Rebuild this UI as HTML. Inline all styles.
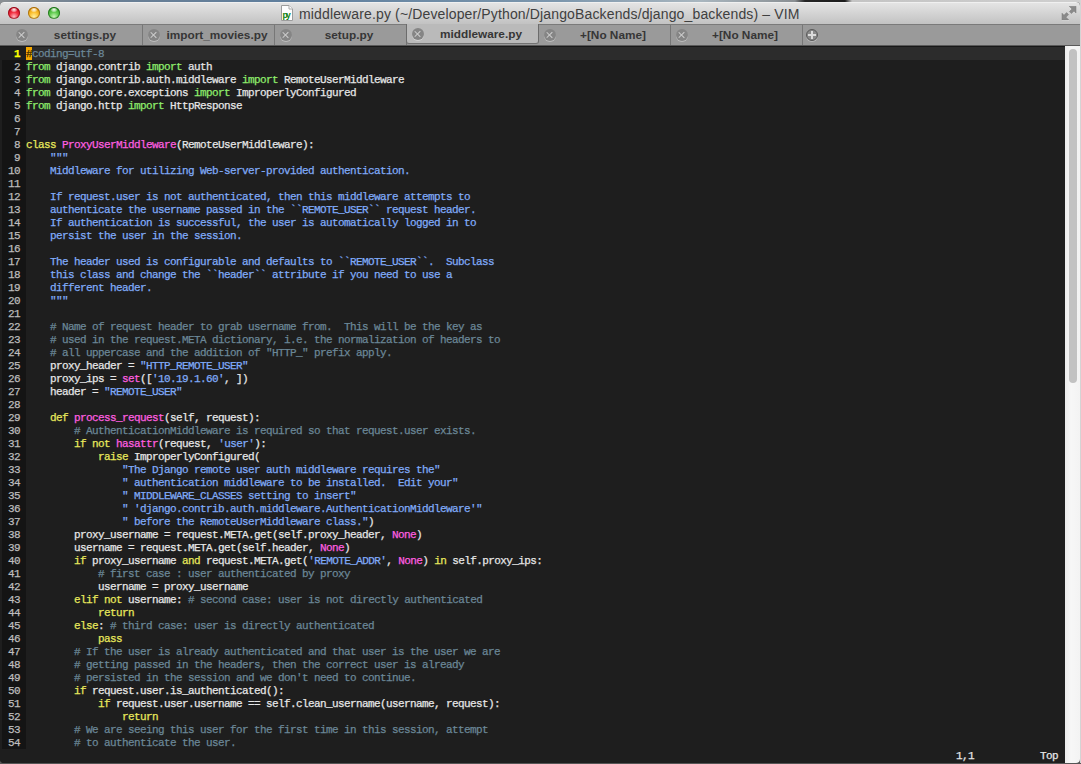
<!DOCTYPE html>
<html><head><meta charset="utf-8">
<style>
*{margin:0;padding:0;box-sizing:border-box}
html,body{width:1081px;height:764px;overflow:hidden;background:#555}
body{position:relative;font-family:"Liberation Sans",sans-serif}
#desk{position:absolute;left:0;top:0;width:1081px;height:8px;background:linear-gradient(90deg,#8a8e92 0px,#6a7f94 110px,#5f7f9e 300px,#7d97ad 560px,#a9b6bf 700px,#8a8f93 795px,#262626 805px,#1c1c1c 845px,#c4c4c4 852px,#cfcfcf 1081px)}
#win{position:absolute;left:0;top:2px;width:1080px;height:761px;background:#1e1e1e;border-radius:4px 4px 4px 4px;overflow:hidden}
#title{position:absolute;left:0;top:0;width:1080px;height:22px;background:linear-gradient(#e4e4e4,#d0d0d0 60%,#c2c2c2);border-top:1px solid #f0f0f0}
.tl{position:absolute;top:4px;width:12px;height:12px;border-radius:50%}.tl:after{content:"";position:absolute;left:3px;top:1px;width:6px;height:4px;border-radius:50%;background:radial-gradient(ellipse at 50% 40%,rgba(255,255,255,.95),rgba(255,255,255,.2) 80%,rgba(255,255,255,0))}
#ttxt{position:absolute;left:299px;top:2.5px;font-size:14px;letter-spacing:0.14px;color:#404040;white-space:nowrap;line-height:16px}
#doc{position:absolute;left:281px;top:2px;width:12px;height:16px}
#tabs{position:absolute;left:0;top:22px;width:1080px;height:21px;background:#9a9a9a;border-top:1px solid #7a7a7a}
.tab{position:absolute;top:0;height:21px;width:132px;border-right:1px solid #777}
.tab span{position:absolute;left:0;width:132px;text-align:center;top:3px;font-size:11.8px;font-weight:bold;color:#363636;line-height:14px;text-indent:16px}
.x{position:absolute;left:5px;top:4px;width:12px;height:12px;border-radius:50%;background:#858585;box-shadow:0 1px 0 rgba(255,255,255,.35)}
.x:before,.x:after{content:"";position:absolute;left:5.4px;top:2px;width:1.2px;height:8px;background:#d0d0d0;transform:rotate(45deg)}
.x:after{transform:rotate(-45deg)}
.tab.act{background:#bababa;top:-1px;height:20px;border-left:1px solid #6c6c6c;border-right:1px solid #6c6c6c;border-bottom:1px solid #727272;border-radius:0 0 3px 3px}
#tabbot{position:absolute;left:0;top:43px;width:1080px;height:2px;background:linear-gradient(#5a5a5a 50%,#181818 50%)}
#ed{position:absolute;left:0;top:45px;width:1065px;height:716px;background:#1e1e1e}
#code{position:absolute;left:2px;top:1px;-webkit-text-stroke:0.25px currentColor;font-family:"Liberation Mono",monospace;font-size:11px;line-height:13px;letter-spacing:-0.6px;color:#e6e6e6;white-space:pre}
#code div{height:13px;width:1063px}
#cl{position:absolute;left:26px;top:0;width:1039px;height:13px;background:#2c2c2c}#lnbg{position:absolute;left:2px;top:13px;width:24px;height:689px;background:#141414}
#code b{font-weight:normal;color:#bdbdbd}
#code .cl b{color:#ffff00;font-weight:bold}
#code i{font-style:normal}
.c{color:#6b8797}.s{color:#80abf8}.k{color:#e8e85c}.g{color:#8eec6c}.f{color:#ff5ee0}
.cur{color:#3a2a00}#cursor{position:absolute;left:26px;top:0;width:6px;height:13px;background:#f5a800}
#ruler{position:absolute;left:956px;top:703px;-webkit-text-stroke:0.25px currentColor;font-family:"Liberation Mono",monospace;font-size:11px;line-height:13px;letter-spacing:-0.6px;color:#e6e6e6;white-space:pre}
#sb{position:absolute;left:1065px;top:44px;width:15px;height:717px;background:linear-gradient(90deg,#ececec,#f7f7f7 40%,#f3f3f3)}
#thumb{position:absolute;left:4px;top:3px;width:8px;height:334px;border-radius:4px;background:#c2c2c2}
</style></head><body>
<div id="desk"></div><div style="position:absolute;left:1080px;top:0;width:1px;height:763px;background:#d4d4d4"></div>
<div id="win">
 <div id="title">
  <div class="tl" style="left:8px;background:radial-gradient(circle at 50% 80%,#ffb8c0 0,#f23040 40%,#c00018 85%,#900010 100%);box-shadow:inset 0 0 0 1px rgba(110,0,10,.55)"></div>
  <div class="tl" style="left:28px;background:radial-gradient(circle at 50% 80%,#fff0a0 0,#fbc030 40%,#d88a00 85%,#a06000 100%);box-shadow:inset 0 0 0 1px rgba(120,70,0,.55)"></div>
  <div class="tl" style="left:48px;background:radial-gradient(circle at 50% 80%,#c8f5b8 0,#62cc50 40%,#2f9a25 85%,#1d6a15 100%);box-shadow:inset 0 0 0 1px rgba(0,70,0,.55)"></div>
  <svg id="doc" viewBox="0 0 12 16"><path d="M0.5 0.5H8L11.5 4V15.5H0.5Z" fill="#fdfdfd" stroke="#9c9c9c"/><path d="M8 0.5V4H11.5" fill="#fff" stroke="#a8a8a8"/><text x="1.6" y="12.6" font-family="Liberation Sans" font-size="8.5" fill="#0d800d" style="font-weight:bold" textLength="8.2">py</text></svg>
  <div id="ttxt">middleware.py (~/Developer/Python/DjangoBackends/django_backends) – VIM</div>
  <svg style="position:absolute;left:1061px;top:3px" width="16" height="16" viewBox="0 0 16 16"><g fill="#fafafa" opacity=".7"><path d="M1 14H8V15H1Z"/></g><g fill="#8a8a8a" stroke="#7a7a7a" stroke-width=".5"><path d="M8.2 0.2H15V7L13 5L10.4 7.6L8.4 5.6L11 3Z"/><path d="M1 7.2L3 9.2L5.6 6.6L7.6 8.6L5 11.2L7.8 14H1Z"/></g></svg>
 </div>
 <div id="tabs">
  <div class="tab" style="left:11px"><div class="x"></div><span>settings.py</span></div>
  <div class="tab" style="left:143px"><div class="x"></div><span>import_movies.py</span></div>
  <div class="tab" style="left:275px"><div class="x"></div><span>setup.py</span></div>
  <div class="tab act" style="left:406px;width:133px"><div class="x"></div><span>middleware.py</span></div>
  <div class="tab" style="left:539px"><div class="x"></div><span>+[No Name]</span></div>
  <div class="tab" style="left:671px"><div class="x"></div><span>+[No Name]</span></div>
  <div style="position:absolute;left:806px;top:4px;width:12px;height:12px;border-radius:50%;background:#8a8a8a;border:1px solid #595959;box-shadow:0 1px 0 rgba(255,255,255,.3)"><div style="position:absolute;left:4px;top:1px;width:2px;height:8px;background:#dcdcdc"></div><div style="position:absolute;left:1px;top:4px;width:8px;height:2px;background:#dcdcdc"></div></div>
 </div>
 <div id="tabbot"></div>
 <div id="ed">
  <div id="cl"></div><div id="lnbg"></div><div id="cursor"></div>
  <div id="code"><div class=cl><b>  1 </b><i class=cur>#</i><i class=c>coding=utf-8</i></div><div><b>  2 </b><i class=g>from</i> django.contrib <i class=g>import</i> auth</div><div><b>  3 </b><i class=g>from</i> django.contrib.auth.middleware <i class=g>import</i> RemoteUserMiddleware</div><div><b>  4 </b><i class=g>from</i> django.core.exceptions <i class=g>import</i> ImproperlyConfigured</div><div><b>  5 </b><i class=g>from</i> django.http <i class=g>import</i> HttpResponse</div><div><b>  6 </b></div><div><b>  7 </b></div><div><b>  8 </b><i class=k>class</i> <i class=f>ProxyUserMiddleware</i>(RemoteUserMiddleware):</div><div><b>  9 </b>    <i class=s>"""</i></div><div><b> 10 </b>    <i class=s>Middleware for utilizing Web-server-provided authentication.</i></div><div><b> 11 </b></div><div><b> 12 </b>    <i class=s>If request.user is not authenticated, then this middleware attempts to</i></div><div><b> 13 </b>    <i class=s>authenticate the username passed in the ``REMOTE_USER`` request header.</i></div><div><b> 14 </b>    <i class=s>If authentication is successful, the user is automatically logged in to</i></div><div><b> 15 </b>    <i class=s>persist the user in the session.</i></div><div><b> 16 </b></div><div><b> 17 </b>    <i class=s>The header used is configurable and defaults to ``REMOTE_USER``.  Subclass</i></div><div><b> 18 </b>    <i class=s>this class and change the ``header`` attribute if you need to use a</i></div><div><b> 19 </b>    <i class=s>different header.</i></div><div><b> 20 </b>    <i class=s>"""</i></div><div><b> 21 </b></div><div><b> 22 </b>    <i class=c># Name of request header to grab username from.  This will be the key as</i></div><div><b> 23 </b>    <i class=c># used in the request.META dictionary, i.e. the normalization of headers to</i></div><div><b> 24 </b>    <i class=c># all uppercase and the addition of "HTTP_" prefix apply.</i></div><div><b> 25 </b>    proxy_header = <i class=s>"HTTP_REMOTE_USER"</i></div><div><b> 26 </b>    proxy_ips = <i class=f>set</i>([<i class=s>'10.19.1.60'</i>, ])</div><div><b> 27 </b>    header = <i class=s>"REMOTE_USER"</i></div><div><b> 28 </b></div><div><b> 29 </b>    <i class=k>def</i> <i class=f>process_request</i>(self, request):</div><div><b> 30 </b>        <i class=c># AuthenticationMiddleware is required so that request.user exists.</i></div><div><b> 31 </b>        <i class=k>if</i> <i class=k>not</i> <i class=f>hasattr</i>(request, <i class=s>'user'</i>):</div><div><b> 32 </b>            <i class=k>raise</i> ImproperlyConfigured(</div><div><b> 33 </b>                <i class=s>"The Django remote user auth middleware requires the"</i></div><div><b> 34 </b>                <i class=s>" authentication middleware to be installed.  Edit your"</i></div><div><b> 35 </b>                <i class=s>" MIDDLEWARE_CLASSES setting to insert"</i></div><div><b> 36 </b>                <i class=s>" 'django.contrib.auth.middleware.AuthenticationMiddleware'"</i></div><div><b> 37 </b>                <i class=s>" before the RemoteUserMiddleware class."</i>)</div><div><b> 38 </b>        proxy_username = request.META.get(self.proxy_header, <i class=f>None</i>)</div><div><b> 39 </b>        username = request.META.get(self.header, <i class=f>None</i>)</div><div><b> 40 </b>        <i class=k>if</i> proxy_username <i class=k>and</i> request.META.get(<i class=s>'REMOTE_ADDR'</i>, <i class=f>None</i>) <i class=k>in</i> self.proxy_ips:</div><div><b> 41 </b>            <i class=c># first case : user authenticated by proxy</i></div><div><b> 42 </b>            username = proxy_username</div><div><b> 43 </b>        <i class=k>elif</i> <i class=k>not</i> username: <i class=c># second case: user is not directly authenticated</i></div><div><b> 44 </b>            <i class=k>return</i></div><div><b> 45 </b>        <i class=k>else</i>: <i class=c># third case: user is directly authenticated</i></div><div><b> 46 </b>            <i class=k>pass</i></div><div><b> 47 </b>        <i class=c># If the user is already authenticated and that user is the user we are</i></div><div><b> 48 </b>        <i class=c># getting passed in the headers, then the correct user is already</i></div><div><b> 49 </b>        <i class=c># persisted in the session and we don't need to continue.</i></div><div><b> 50 </b>        <i class=k>if</i> request.user.is_authenticated():</div><div><b> 51 </b>            <i class=k>if</i> request.user.username == self.clean_username(username, request):</div><div><b> 52 </b>                <i class=k>return</i></div><div><b> 53 </b>        <i class=c># We are seeing this user for the first time in this session, attempt</i></div><div><b> 54 </b>        <i class=c># to authenticate the user.</i></div></div>
  <div id="ruler">1,1           Top</div>
 </div>
 <div id="sb"><div id="thumb"></div></div>
</div>
</body></html>
